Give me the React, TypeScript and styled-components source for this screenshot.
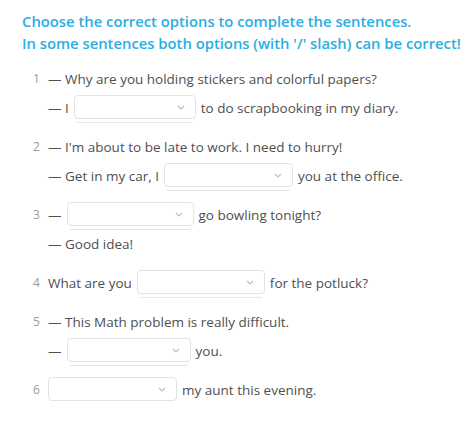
import React from "react"
import styled, { createGlobalStyle } from "styled-components"

const GlobalStyle = createGlobalStyle`
  body {
    margin: 0;
    background: #fff;
    font-family: "Open Sans", "Noto Sans", sans-serif;
  }
`

type Part = string | { select: number }

const exercises: { n: number; lines: Part[][] }[] = [
  { n: 1, lines: [["— Why are you holding stickers and colorful papers?"], ["— I", { select: 122 }, "to do scrapbooking in my diary."]] },
  { n: 2, lines: [["— I'm about to be late to work. I need to hurry!"], ["— Get in my car, I", { select: 129 }, "you at the office."]] },
  { n: 3, lines: [["—", { select: 127 }, "go bowling tonight?"], ["— Good idea!"]] },
  { n: 4, lines: [["What are you", { select: 128 }, "for the potluck?"]] },
  { n: 5, lines: [["— This Math problem is really difficult."], ["—", { select: 124 }, "you."]] },
  { n: 6, lines: [[{ select: 129 }, "my aunt this evening."]] },
]

const Chevron = () => (
  <svg width="8" height="5" viewBox="0 0 8 5" fill="none">
    <path d="M1 1l3 3l3-3" stroke="#bdbdbd" strokeWidth="1.1" />
  </svg>
)

const App: React.FC = () => {
  return <Wrapper>
    <GlobalStyle />
    <Heading>
      Choose the correct options to complete the sentences.<br />
      In some sentences both options (with '/' slash) can be correct!
    </Heading>
    <List>
      {exercises.map(ex => <Item key={ex.n}>
        <Num>{ex.n}</Num>
        <Lines>
          {ex.lines.map((line, i) => <Line key={i}>
            {line.map((p, j) => typeof p === "string"
              ? <span key={j}>{p}</span>
              : <Select key={j} $w={p.select}><Chevron /></Select>)}
          </Line>)}
        </Lines>
      </Item>)}
    </List>
  </Wrapper>
}

const Wrapper = styled.div`
  padding: 10px 0 0 22px;
`

const Heading = styled.h1`
  margin: 0 0 10px;
  color: #2aaee3;
  font-size: 14.8px;
  font-weight: 600;
  line-height: 22px;
  white-space: nowrap;
`

const List = styled.div`
  display: flex;
  flex-direction: column;
  gap: 10px;
`

const Item = styled.div`
  display: flex;
`

const Num = styled.div`
  width: 26px;
  padding-left: 11px;
  box-sizing: border-box;
  font-size: 12px;
  color: #9a9a9a;
  line-height: 29px;
`

const Lines = styled.div`
  display: flex;
  flex-direction: column;
`

const Line = styled.div`
  display: flex;
  align-items: center;
  gap: 5px;
  height: 29px;
  font-size: 13.5px;
  color: #4f4f4f;
  white-space: nowrap;
`

const Select = styled.div<{ $w: number }>`
  width: ${p => p.$w}px;
  height: 24px;
  box-sizing: border-box;
  border: 1px solid #e3e3e3;
  border-radius: 4px;
  background: #fff;
  display: flex;
  align-items: center;
  justify-content: flex-end;
  padding-right: 10px;
  margin-top: -1px;
  box-shadow: 0 6px 0 -3px #fff, 0 7px 0 -3px #e6e6e6;
`

export default App
